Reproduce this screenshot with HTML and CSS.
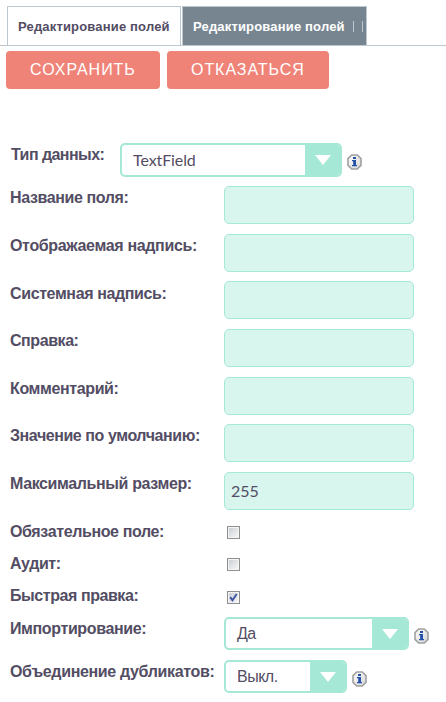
FILE: index.html
```html
<!DOCTYPE html>
<html lang="ru">
<head>
<meta charset="utf-8">
<title>Редактирование полей</title>
<link rel="stylesheet" href="styles.css">
</head>
<body>
<svg class="defs" width="0" height="0">
  <defs>
    <linearGradient id="shine" x1="0" y1="0" x2="1" y2="1"><stop offset="0" stop-color="#fff"/><stop offset="1" stop-color="#d4d4d4"/></linearGradient>
    <symbol id="info" viewBox="0 0 15 16">
      <path d="M4.7 1h5.6L14 4.7v6.6L10.3 15H4.7L1 11.3V4.7z" fill="url(#shine)" stroke="#a0a0a0" stroke-width="1.6"/>
      <path d="M6 3h3v2H6zM5 6h4v5h1v1.2H5V11h1.2V7.2H5z" fill="#2450a8"/>
    </symbol>
    <symbol id="arrow" viewBox="0 0 16 10"><path d="M0 0h16L8 10z" fill="#fff"/></symbol>
  </defs>
</svg>
<nav class="tabs">
  <div class="tab"><span>Редактирование полей</span></div>
  <div class="tab active"><span>Редактирование полей</span><i class="bar"></i><i class="bar"></i></div>
</nav>
<div class="actions">
  <button class="btn save">СОХРАНИТЬ</button>
  <button class="btn cancel">ОТКАЗАТЬСЯ</button>
</div>
<div class="type-row">
  <label class="type-label">Тип данных:</label>
  <div class="select type-select"><span class="value latin">TextField</span><span class="toggle"><svg class="arrow"><use href="#arrow"/></svg></span></div>
  <svg class="info"><use href="#info"/></svg>
</div>
<div class="form">
  <label>Название поля:</label><input type="text">
  <label class="wide">Отображаемая надпись:</label><input type="text">
  <label class="low">Системная надпись:</label><input type="text">
  <label class="tight">Справка:</label><input type="text">
  <label>Комментарий:</label><input type="text">
  <label class="tight">Значение по умолчанию:</label><input type="text">
  <label>Максимальный размер:</label><input type="text" value="255">
  <label class="low">Обязательное поле:</label><span class="check"></span>
  <label class="low tight">Аудит:</label><span class="check"></span>
  <label class="low tight">Быстрая правка:</label><span class="check on"><svg viewBox="0 0 9 9"><path d="M1.2 4.2L3.5 7.2L7.7 1" fill="none" stroke="#4259a4" stroke-width="2"/></svg></span>
  <label>Импортирование:</label>
  <div class="field"><div class="select import-select"><span class="value">Да</span><span class="toggle"><svg class="arrow"><use href="#arrow"/></svg></span></div><svg class="info"><use href="#info"/></svg></div>
  <label class="wide">Объединение дубликатов:</label>
  <div class="field"><div class="select merge-select"><span class="value">Выкл.</span><span class="toggle"><svg class="arrow"><use href="#arrow"/></svg></span></div><svg class="info"><use href="#info"/></svg></div>
</div>
</body>
</html>
```
FILE: styles.css
```css
* { box-sizing: border-box; }
body { margin: 0; height: 702px; overflow: hidden; background: #fff; color: #534d64; font-family: "Liberation Sans", Arial, sans-serif; }
.defs { position: absolute; }
.tabs { display: flex; gap: 1px; margin-top: 6px; padding-left: 7px; height: 40px; border-bottom: 1px solid #bcc7cf; }
.tab { display: flex; align-items: center; width: 174px; height: 40px; padding-left: 10px; border: 1px solid #bcc7cf; font-size: 13px; font-weight: bold; white-space: nowrap; letter-spacing: 0.17px; }
.tab.active { width: 185px; background: #778591; color: #fff; }
.tab span { width: 152px; }
.bar { width: 1px; height: 11px; margin-left: 8px; background: #bcc7cf; }
.actions { display: flex; gap: 7px; margin: 5px 0 0 6px; }
.btn { height: 38px; padding: 0 0 0 24px; border: 0; border-radius: 4px; background: #f08377; color: #fff; font: 16px "Liberation Sans", Arial, sans-serif; text-align: left; letter-spacing: 0.95px; }
.save { width: 154px; }
.cancel { width: 162px; }
.type-row { display: flex; margin: 54px 0 0 11px; height: 43px; }
label { font-size: 16px; font-weight: bold; line-height: 18px; padding-top: 3px; white-space: nowrap; letter-spacing: -0.38px; }
.wide { letter-spacing: -0.34px; }
.tight { letter-spacing: -0.43px; }
.type-label { width: 109px; letter-spacing: -0.55px; }
.select { display: flex; flex: none; height: 33px; border: 2px solid #a5e8d6; border-radius: 5px; background: #fff; font-size: 16px; overflow: hidden; }
.type-select { width: 222px; height: 34px; }
.import-select { width: 185px; }
.merge-select { width: 123px; }
.value { flex: 1; padding-left: 11px; line-height: 30px; letter-spacing: -0.5px; }
.latin { font-family: Lato, sans-serif; line-height: 30px; letter-spacing: -0.1px; }
.toggle { display: flex; width: 35px; padding: 10px 0 0 10px; background: #a5e8d6; }
.arrow { width: 16px; height: 10px; }
.info { flex: none; width: 15px; height: 16px; margin: 11px 0 0 5px; }
.form { display: grid; grid-template-columns: 214px 210px; grid-template-rows: 48px 47px 48px 48px 47px 48px 47px 32px 32px 34px 43px 33px; margin-left: 10px; }
input { width: 190px; height: 38px; padding: 0 6px 1px; border: 1px solid #a5e8d6; border-radius: 5px; background: #d8f5ee; color: #534d64; font: 16px Lato, sans-serif; }
.low { padding-top: 4px; }
.check { width: 13px; height: 13px; margin: 7px 0 0 3px; border: 1px solid #8e8f8f; background: linear-gradient(135deg, #cbcfd5, #f6f6f6) center / 9px 9px no-repeat #f4f4f4; }
.check.on { margin-top: 8px; }
.check svg { display: block; width: 9px; height: 9px; margin: 1px; }
.field { display: flex; }
```
